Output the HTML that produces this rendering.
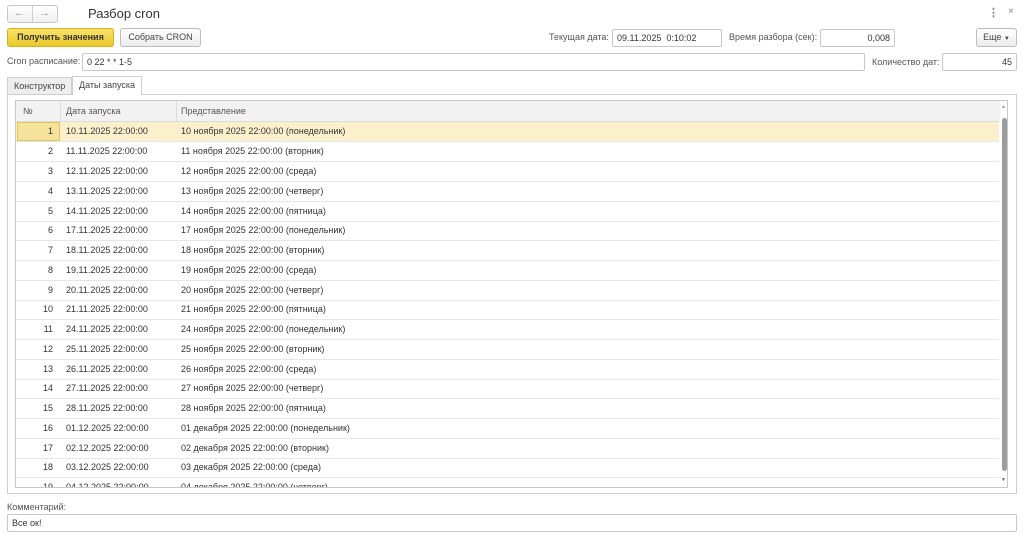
<!DOCTYPE html>
<html><head><meta charset="utf-8"><style>
*{box-sizing:border-box;margin:0;padding:0}
html,body{width:1024px;height:535px;overflow:hidden}
body{background:#fff;font-family:"Liberation Sans",sans-serif;font-size:9px;color:#333;position:relative}
.a{position:absolute;white-space:nowrap}
.fld{position:absolute;border:1px solid #c8c8c8;border-radius:2px;background:#fff;height:18px;line-height:16px;padding:0 4px;font-size:9px;color:#333;white-space:nowrap}
.lbl{position:absolute;color:#555;line-height:16px;white-space:nowrap}
.btn{position:absolute;border:1px solid #bdbdbd;border-radius:3px;background:linear-gradient(#fff,#ececec);height:19px;line-height:17px;text-align:center;color:#444;white-space:nowrap}
.row{position:absolute;left:16px;width:983px;height:20px;border-bottom:1px solid #e6e6e6;line-height:19px;white-space:nowrap}
.row span{position:absolute}
.n{left:0;width:37px;text-align:right}
.d{left:50px}
.p{left:165px}
</style></head><body>
<div class="a" style="left:7px;top:5px;width:51px;height:18px;border:1px solid #c6c6c6;border-radius:3px;background:linear-gradient(#fff,#f0f0f0)"></div>
<div class="a" style="left:32px;top:6px;width:1px;height:16px;background:#d0d0d0"></div>
<div class="a" style="left:14px;top:5px;color:#999;font-size:11px;line-height:17px">&#8592;</div>
<div class="a" style="left:39px;top:5px;color:#999;font-size:11px;line-height:17px">&#8594;</div>
<div class="a" style="left:88px;top:5px;font-size:13px;color:#333;line-height:18px">Разбор cron</div>
<div class="a" style="left:988px;top:6px;color:#777;font-size:11px;font-weight:bold">&#8942;</div>
<div class="a" style="left:1008px;top:6px;color:#888;font-size:10px">×</div>

<div class="btn" style="left:7px;top:28px;width:107px;background:linear-gradient(#f8e26a,#ecc92a);border-color:#d4b21e;font-weight:bold;color:#333">Получить значения</div>
<div class="btn" style="left:120px;top:28px;width:81px">Собрать CRON</div>
<div class="lbl" style="left:549px;top:29px">Текущая дата:</div>
<div class="fld" style="left:612px;top:29px;width:110px">09.11.2025&nbsp; 0:10:02</div>
<div class="lbl" style="left:729px;top:29px">Время разбора (сек):</div>
<div class="fld" style="left:820px;top:29px;width:75px;text-align:right">0,008</div>
<div class="btn" style="left:976px;top:28px;width:41px">Еще <span style="font-size:6px">▼</span></div>

<div class="lbl" style="left:7px;top:53px">Cron расписание:</div>
<div class="fld" style="left:82px;top:53px;width:783px">0 22 * * 1-5</div>
<div class="lbl" style="left:872px;top:54px">Количество дат:</div>
<div class="fld" style="left:942px;top:53px;width:75px;text-align:right">45</div>

<div class="a" style="left:7px;top:94px;width:1010px;height:400px;border:1px solid #cfcfcf"></div>
<div class="a" style="left:7px;top:77px;width:65px;height:18px;border:1px solid #cfcfcf;background:#eee;line-height:16px;padding-left:6px;color:#444">Конструктор</div>
<div class="a" style="left:72px;top:76px;width:70px;height:19px;border:1px solid #cfcfcf;border-bottom:none;background:#fff;line-height:17px;padding-left:6px;color:#444">Даты запуска</div>

<div class="a" style="left:15px;top:100px;width:993px;height:388px;border:1px solid #c8c8c8;overflow:hidden">
<div class="a" style="left:0;top:0;width:984px;height:21px;background:#f2f2f2;border-bottom:1px solid #dcdcdc;color:#555;line-height:21px">
<span class="a" style="left:7px">№</span>
<div class="a" style="left:44px;top:0;width:1px;height:21px;background:#ddd"></div>
<span class="a" style="left:50px">Дата запуска</span>
<div class="a" style="left:160px;top:0;width:1px;height:21px;background:#ddd"></div>
<span class="a" style="left:165px">Представление</span>
</div>
<div class="a" style="left:985px;top:0;width:7px;height:386px;background:#fff"></div>
<div class="a" style="left:985px;top:3px;color:#999;font-size:5px">▲</div>
<div class="a" style="left:986px;top:17px;width:5px;height:353px;background:#9c9c9c;border-radius:3px"></div>
<div class="a" style="left:985px;top:376px;color:#666;font-size:5px">▼</div>
</div>

<div class="lbl" style="left:7px;top:499px">Комментарий:</div>
<div class="fld" style="left:7px;top:514px;width:1010px">Все ок!</div>

<div class="a" style="left:16px;top:121px;width:984px;height:366px;overflow:hidden">
<div style="position:absolute;left:-16px;top:-121px;width:1024px;height:500px">
<div class="row" style="top:122px;background:#fbf0cc"><span style="left:1px;top:0;width:43px;height:19px;background:#f6e39b;border:1px solid #e0c55a"></span><span class="n">1</span><span class="d">10.11.2025 22:00:00</span><span class="p">10 ноября 2025 22:00:00 (понедельник)</span></div>
<div class="row" style="top:142px"><span class="n">2</span><span class="d">11.11.2025 22:00:00</span><span class="p">11 ноября 2025 22:00:00 (вторник)</span></div>
<div class="row" style="top:162px"><span class="n">3</span><span class="d">12.11.2025 22:00:00</span><span class="p">12 ноября 2025 22:00:00 (среда)</span></div>
<div class="row" style="top:182px"><span class="n">4</span><span class="d">13.11.2025 22:00:00</span><span class="p">13 ноября 2025 22:00:00 (четверг)</span></div>
<div class="row" style="top:202px"><span class="n">5</span><span class="d">14.11.2025 22:00:00</span><span class="p">14 ноября 2025 22:00:00 (пятница)</span></div>
<div class="row" style="top:221px"><span class="n">6</span><span class="d">17.11.2025 22:00:00</span><span class="p">17 ноября 2025 22:00:00 (понедельник)</span></div>
<div class="row" style="top:241px"><span class="n">7</span><span class="d">18.11.2025 22:00:00</span><span class="p">18 ноября 2025 22:00:00 (вторник)</span></div>
<div class="row" style="top:261px"><span class="n">8</span><span class="d">19.11.2025 22:00:00</span><span class="p">19 ноября 2025 22:00:00 (среда)</span></div>
<div class="row" style="top:281px"><span class="n">9</span><span class="d">20.11.2025 22:00:00</span><span class="p">20 ноября 2025 22:00:00 (четверг)</span></div>
<div class="row" style="top:300px"><span class="n">10</span><span class="d">21.11.2025 22:00:00</span><span class="p">21 ноября 2025 22:00:00 (пятница)</span></div>
<div class="row" style="top:320px"><span class="n">11</span><span class="d">24.11.2025 22:00:00</span><span class="p">24 ноября 2025 22:00:00 (понедельник)</span></div>
<div class="row" style="top:340px"><span class="n">12</span><span class="d">25.11.2025 22:00:00</span><span class="p">25 ноября 2025 22:00:00 (вторник)</span></div>
<div class="row" style="top:360px"><span class="n">13</span><span class="d">26.11.2025 22:00:00</span><span class="p">26 ноября 2025 22:00:00 (среда)</span></div>
<div class="row" style="top:379px"><span class="n">14</span><span class="d">27.11.2025 22:00:00</span><span class="p">27 ноября 2025 22:00:00 (четверг)</span></div>
<div class="row" style="top:399px"><span class="n">15</span><span class="d">28.11.2025 22:00:00</span><span class="p">28 ноября 2025 22:00:00 (пятница)</span></div>
<div class="row" style="top:419px"><span class="n">16</span><span class="d">01.12.2025 22:00:00</span><span class="p">01 декабря 2025 22:00:00 (понедельник)</span></div>
<div class="row" style="top:439px"><span class="n">17</span><span class="d">02.12.2025 22:00:00</span><span class="p">02 декабря 2025 22:00:00 (вторник)</span></div>
<div class="row" style="top:458px"><span class="n">18</span><span class="d">03.12.2025 22:00:00</span><span class="p">03 декабря 2025 22:00:00 (среда)</span></div>
<div class="row" style="top:478px"><span class="n">19</span><span class="d">04.12.2025 22:00:00</span><span class="p">04 декабря 2025 22:00:00 (четверг)</span></div>
</div></div>
</body></html>
